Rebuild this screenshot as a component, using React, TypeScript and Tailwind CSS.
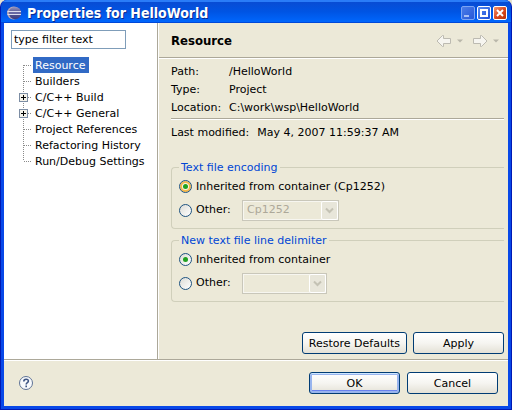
import React from "react";

const pages = [
  { name: "Resource", expandable: false },
  { name: "Builders", expandable: false },
  { name: "C/C++ Build", expandable: true },
  { name: "C/C++ General", expandable: true },
  { name: "Project References", expandable: false },
  { name: "Refactoring History", expandable: false },
  { name: "Run/Debug Settings", expandable: false },
];

function EclipseLogo() {
  return (
    <svg width="16" height="16" viewBox="0 0 16 16" aria-hidden="true">
      <defs>
        <linearGradient id="globe" x1="0" y1="0" x2="0" y2="1">
          <stop offset="0" stopColor="#9a98c0" />
          <stop offset="0.4" stopColor="#5c5c98" />
          <stop offset="1" stopColor="#3c3c80" />
        </linearGradient>
      </defs>
      <circle cx="7.500" cy="8" r="6.500" fill="#b8a8b4" />
      <circle cx="9" cy="8" r="6.200" fill="url(#globe)" />
      <path d="M1.500 6.500h13.500M1.500 9.500h13.500" stroke="#dcdcee" strokeWidth="1" />
      <path d="M3 8h12" stroke="#7a7ab4" strokeWidth="1" />
    </svg>
  );
}

function TreeGuide({ first, last, expandable }: { first: boolean; last: boolean; expandable: boolean }) {
  return (
    <svg width="14" height="16" viewBox="0 0 14 16" className="shrink-0" shapeRendering="crispEdges" aria-hidden="true">
      <path d={`M4.500 ${first ? 8 : 0}V${last ? 8 : 16}`} stroke="#8a8a8a" strokeDasharray="1 1" />
      <path d="M5 8.500H13" stroke="#8a8a8a" strokeDasharray="1 1" />
      {expandable && (
        <g>
          <rect x="0.500" y="4.500" width="8" height="8" fill="#f4f2ea" stroke="#7c8da4" />
          <path d="M2 8.500h5M4.500 6v5" stroke="#000" />
        </g>
      )}
    </svg>
  );
}

function HistoryArrow({ forward = false }: { forward?: boolean }) {
  return (
    <button type="button" aria-label={forward ? "Forward" : "Back"} className="flex items-center gap-1">
      <svg width="18" height="14" viewBox="0 0 18 14" aria-hidden="true">
        <path
          d={forward ? "M2.500 4.500h7v-3h1l5.500 5.500-5.500 5.500h-1v-3h-7z" : "M15.500 4.500h-7v-3h-1L2 7l5.500 5.500h1v-3h7z"}
          fill="#f6f5f0"
          stroke="#bcbab1"
        />
      </svg>
      <svg width="6" height="4" viewBox="0 0 6 4" aria-hidden="true">
        <path d="M0 0.500h6L3 3.500z" fill="#b9b7aa" />
      </svg>
    </button>
  );
}

function CaptionButton({ kind }: { kind: "Minimize" | "Maximize" | "Close" }) {
  const face =
    kind === "Close"
      ? "bg-linear-to-br from-[#f0946c] via-[#dc4a20] to-[#b83408] border-white"
      : kind === "Maximize"
        ? "bg-linear-to-br from-[#5a8cf0] to-[#1c4cd8] border-white"
        : "bg-linear-to-br from-[#4a7ce8] to-[#2858d8] border-[#7ca4f4]";
  return (
    <button type="button" aria-label={kind} className={`flex size-[14px] items-center justify-center rounded-[2px] border ${face}`}>
      <svg width="12" height="12" viewBox="0 0 12 12" aria-hidden="true">
        {kind === "Minimize" && <path d="M2 9h5" stroke="#a8c0f6" strokeWidth="2" />}
        {kind === "Maximize" && <path d="M3 3h6v6h-6z" fill="none" stroke="#fff" strokeWidth="2" />}
        {kind === "Close" && <path d="M3 3l6 6M9 3L3 9" stroke="#fff" strokeWidth="2" />}
      </svg>
    </button>
  );
}

function PushButton({ children, primary = false }: { children: React.ReactNode; primary?: boolean }) {
  return (
    <button
      type="button"
      className={`h-[22px] min-w-[91px] rounded-[3px] border border-[#003c74] bg-linear-to-b from-white via-[#f6f5f1] to-[#e4e1d6] px-[6px] pt-[2px] ${
        primary ? "shadow-[inset_0_1px_#cee7ff,inset_0_0_0_2px_#98b4ee,inset_0_-3px_#6982ee]" : ""
      }`}
    >
      {children}
    </button>
  );
}

function Radio({ name, label, checked = false, hot = false }: { name: string; label: string; checked?: boolean; hot?: boolean }) {
  return (
    <label className="flex items-center gap-1 leading-[18px]">
      <input
        type="radio"
        name={name}
        defaultChecked={checked}
        className={`flex size-[13px] appearance-none items-center justify-center rounded-full border border-[#1d5281] before:size-[5px] before:rounded-full checked:before:bg-[#21a121] ${
          hot
            ? "bg-[#fbf6e8] shadow-[inset_0_0_0_2px_#f5b84a]"
            : "bg-linear-to-br from-[#dddcd6] to-white"
        }`}
      />
      {label}
    </label>
  );
}

function DisabledCombo({ label, value, width }: { label: string; value: string; width: string }) {
  return (
    <span className={`relative flex ${width}`}>
      <select
        disabled
        aria-label={label}
        className="h-[21px] w-full appearance-none border border-[#c9c7ba] bg-[#ece9d8] pl-1 text-[#aca899] opacity-100 shadow-[inset_0_0_0_1px_#f7f6f0]"
      >
        <option>{value}</option>
      </select>
      <span className="pointer-events-none absolute inset-y-px right-px flex w-[17px] items-center justify-center rounded-[2px] border border-white bg-[#e8e6da]">
        <svg width="9" height="7" viewBox="0 0 9 7" aria-hidden="true">
          <path d="M1 1.500l3.500 3.500L8 1.500" fill="none" stroke="#c4c2b4" strokeWidth="2" />
        </svg>
      </span>
    </span>
  );
}

function OptionGroup({ title, name, inherited, value, width, hot = false }: {
  title: string;
  name: string;
  inherited: string;
  value: string;
  width: string;
  hot?: boolean;
}) {
  return (
    <fieldset className="rounded-l-[4px] border border-r-0 border-[#d0cfbb] pb-[7px] pl-[7px]">
      <legend className="h-[14px] px-[2px] leading-4 text-[#0046d5]">{title}</legend>
      <div className="flex h-[25px] items-center">
        <Radio name={name} label={inherited} checked hot={hot} />
      </div>
      <div className="flex h-[22px] items-center">
        <div className="w-[63px]">
          <Radio name={name} label="Other:" />
        </div>
        <DisabledCombo label={`${title}: other`} value={value} width={width} />
      </div>
    </fieldset>
  );
}

export default function App() {
  return (
    <div className="min-h-screen bg-[#e4e2d0] font-['DejaVu_Sans',Verdana,sans-serif] text-[11px] leading-4 text-black">
      <div className="flex min-h-screen flex-col overflow-hidden rounded-t-[7px] border-x border-b border-[#0019b4] bg-[#0831d9]">
        <header className="flex h-[23px] items-center gap-1 bg-linear-to-b from-[#0a4ad0] via-[#0054e3] to-[#0068ff] pt-[3px] pr-1 pl-[5px] text-white shadow-[inset_0_-1px_#0048d8,inset_0_2px_#2a7cf8]">
          <EclipseLogo />
          <h1 className="grow pl-px font-['DejaVu_Sans_Condensed','DejaVu_Sans',sans-serif] text-[14px] font-bold [text-shadow:1px_1px_#0a2a90]">
            Properties for HelloWorld
          </h1>
          <div className="flex gap-[2px]">
            <CaptionButton kind="Minimize" />
            <CaptionButton kind="Maximize" />
            <CaptionButton kind="Close" />
          </div>
        </header>

        <div className="flex grow flex-col border-x-3 border-b-3 border-[#0848e8] bg-[#ece9d8]">
          <div className="flex grow">
            <aside className="w-[154px] shrink-0 border-r border-[#aca899] bg-white pt-[7px] pl-[7px]">
              <input
                type="text"
                aria-label="Filter pages"
                defaultValue="type filter text"
                className="block h-[19px] w-[115px] border border-[#7f9db9] bg-white px-[2px]"
              />
              <ul className="pt-2 pl-2">
                {pages.map((page, i) => (
                  <li key={page.name} className="flex h-4">
                    <TreeGuide first={i === 0} last={i === pages.length - 1} expandable={page.expandable} />
                    <a href="#" className={`pr-1 pl-[2px] leading-[18px] whitespace-nowrap ${i === 0 ? "bg-[#316ac5] text-white" : ""}`}>
                      {page.name}
                    </a>
                  </li>
                ))}
              </ul>
            </aside>

            <main className="flex grow flex-col border-l border-white">
              <div className="flex h-[35px] items-center justify-between border-b border-[#aca899] pt-px pr-[9px] pl-3 shadow-[0_1px_#fff]">
                <h2 className="font-['DejaVu_Sans_Condensed','DejaVu_Sans',sans-serif] text-[13px] font-bold">Resource</h2>
                <div className="flex gap-2">
                  <HistoryArrow />
                  <HistoryArrow forward />
                </div>
              </div>

              <div className="flex grow flex-col pt-[5px] pr-1 pl-3">
                <dl className="grid grid-cols-[58px_1fr] border-b border-[#aca899] pb-px leading-[18px] shadow-[0_1px_#fff]">
                  <dt>Path:</dt>
                  <dd>/HelloWorld</dd>
                  <dt>Type:</dt>
                  <dd>Project</dd>
                  <dt>Location:</dt>
                  <dd>C:\work\wsp\HelloWorld</dd>
                </dl>
                <dl className="flex gap-2 pt-[6px] pb-[19px]">
                  <dt>Last modified:</dt>
                  <dd>May 4, 2007 11:59:37 AM</dd>
                </dl>
                <div className="flex flex-col gap-1">
                  <OptionGroup title="Text file encoding" name="encoding" inherited="Inherited from container (Cp1252)" value="Cp1252" width="w-[97px]" hot />
                  <OptionGroup title="New text file line delimiter" name="delimiter" inherited="Inherited from container" value="" width="w-[85px]" />
                </div>
                <div className="mt-auto flex justify-end gap-[6px] pb-[5px]">
                  <PushButton>Restore Defaults</PushButton>
                  <PushButton>Apply</PushButton>
                </div>
              </div>
            </main>
          </div>

          <footer className="flex h-[47px] items-center justify-between border-t border-[#aca899] pr-[10px] pl-[14px] shadow-[inset_0_1px_#fff]">
            <button type="button" aria-label="Help">
              <svg width="16" height="16" viewBox="0 0 16 16" aria-hidden="true">
                <circle cx="8" cy="8" r="6.500" fill="#f8fafc" stroke="#5f7396" />
                <path d="M5.800 6.500c0-3 4.600-3 4.600-.4 0 1.600-2.200 1.600-2.200 3.400M8.200 10.500v1.700" fill="none" stroke="#3f5684" strokeWidth="1.600" />
              </svg>
            </button>
            <div className="flex gap-[7px]">
              <PushButton primary>OK</PushButton>
              <PushButton>Cancel</PushButton>
            </div>
          </footer>
        </div>
      </div>
    </div>
  );
}
